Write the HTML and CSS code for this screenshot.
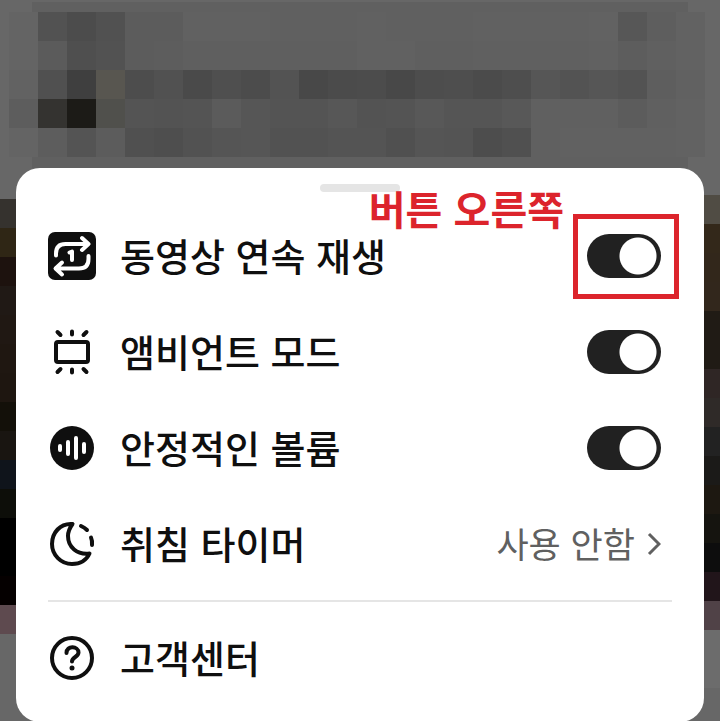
FILE: index.html
```html
<!DOCTYPE html>
<html lang="ko">
<head>
  <meta charset="UTF-8">
  <meta name="viewport" content="width=device-width, initial-scale=1.0">
  <title>재생 설정</title>
  <link rel="stylesheet" href="styles.css">
</head>
<body>
  <div class="header">
    <div id="mosaic" class="mosaic"></div>
  </div>

  <div class="main">
    <div id="stripLeft" class="strip strip-left"></div>

    <div class="sheet">
      <div class="handle"></div>

      <div class="list">
        <div class="row">
          <svg class="icon" viewBox="0 0 48 48" aria-hidden="true">
            <rect width="48" height="48" rx="7" fill="#0f0f0f"/>
            <g fill="none" stroke="#fff" stroke-width="4" stroke-linecap="round" stroke-linejoin="round">
              <path d="M8 23.500v-2q0-9.500 9.500-9.500h22M34 6l6.500 6-6.500 6"/>
              <path d="M40.500 24v3q0 9.500-9.500 9.500H8M14 30.500l-6.500 6 6.500 6"/>
              <path d="M21.500 20.500l2.500-1v8.500"/>
            </g>
          </svg>
          <label class="label" for="autoplay">동영상 연속 재생</label>
          <div class="control">
            <input type="checkbox" id="autoplay" class="toggle" checked>
            <div class="mark"></div>
          </div>
          <div class="note">버튼 오른쪽</div>
        </div>

        <div class="row">
          <svg class="icon" viewBox="0 0 48 48" aria-hidden="true">
            <g fill="none" stroke="#0f0f0f" stroke-width="4" stroke-linecap="round" stroke-linejoin="round">
              <rect x="8" y="14" width="32" height="20" rx="2"/>
              <path d="M9.500 4l3 3M24 3.500v3M38.500 4l-3 3M9.500 44l3-3M24 41.500v3M38.500 44l-3-3"/>
            </g>
          </svg>
          <label class="label" for="ambient">앰비언트 모드</label>
          <div class="control">
            <input type="checkbox" id="ambient" class="toggle" checked>
          </div>
        </div>

        <div class="row">
          <svg class="icon" viewBox="0 0 48 48" aria-hidden="true">
            <circle cx="24" cy="24" r="22" fill="#0f0f0f"/>
            <path d="M12 22v4M20 18v12M28 14v20M36 20v8" fill="none" stroke="#fff" stroke-width="4" stroke-linecap="round"/>
          </svg>
          <label class="label" for="volume">안정적인 볼륨</label>
          <div class="control">
            <input type="checkbox" id="volume" class="toggle" checked>
          </div>
        </div>

        <button type="button" class="row">
          <svg class="icon" viewBox="0 0 48 48" aria-hidden="true">
            <g fill="none" stroke="#0f0f0f" stroke-width="4" stroke-linecap="round" stroke-linejoin="round">
              <path d="M24.500 4C12 3 4 13 4 24C4 35 13 44 24 44C32 44 38.500 40 41.500 33.500C29 35 20 27 20 16C20 11 22 7.500 24.500 4Z"/>
              <path d="M33 6q3.500 1.500 6 4M43 17.500q1.500 3.500 1 7.500"/>
            </g>
          </svg>
          <span class="label">취침 타이머</span>
          <span class="value">사용 안함</span>
          <svg class="chevron" viewBox="0 0 14 24" aria-hidden="true">
            <path d="M2 2l10 10L2 22" fill="none" stroke="#606060" stroke-width="3"/>
          </svg>
        </button>

        <hr class="divider">

        <a href="#help" class="row">
          <svg class="icon" viewBox="0 0 48 48" aria-hidden="true">
            <circle cx="24" cy="24" r="20" fill="none" stroke="#0f0f0f" stroke-width="4"/>
            <path d="M18.500 19c0-8 12-7 12-0.500c0 4.500-6.500 4.500-6.500 9" fill="none" stroke="#0f0f0f" stroke-width="4" stroke-linecap="round"/>
            <circle cx="24" cy="34" r="2.500" fill="#0f0f0f"/>
          </svg>
          <span class="label">고객센터</span>
        </a>
      </div>
    </div>

    <div id="stripRight" class="strip strip-right"></div>
  </div>

  <script src="script.js"></script>
</body>
</html>
```
FILE: styles.css
```css
* {
  box-sizing: border-box;
}

body {
  margin: 0;
  min-height: 100vh;
  background: #676767;
  color: #0f0f0f;
  font-family: "Noto Sans CJK KR", sans-serif;
}

.header {
  height: 168px;
  padding: 12px 15px 0 9px;
  background: linear-gradient(#606060, #606060) 32px 2px / calc(100% - 64px) 100% no-repeat;
}

.mosaic {
  display: grid;
  grid-template-columns: repeat(24, 1fr);
  grid-auto-rows: 29px;
}

.main {
  display: flex;
}

.strip {
  flex: none;
  width: 16px;
}

.strip-left {
  padding-top: 31px;
}

.strip-right {
  padding-top: 27px;
}

.strip div {
  height: 29px;
}

.sheet {
  flex: 1;
  padding: 16px 0;
  background: #fff;
  border-radius: 24px;
}

.handle {
  width: 80px;
  height: 8px;
  margin: 0 auto 16px;
  border-radius: 4px;
  background: #e5e5e5;
}

.row {
  position: relative;
  display: flex;
  align-items: center;
  width: 100%;
  height: 96px;
  padding: 0 43px 0 32px;
  border: none;
  background: none;
  color: inherit;
  font-family: inherit;
  text-align: left;
  text-decoration: none;
}

.icon {
  flex: none;
  width: 48px;
  height: 48px;
  margin-right: 24px;
}

.label,
.value {
  padding-bottom: 2px;
  line-height: 48px;
}

.label {
  flex: 1;
  font-size: 38px;
  font-weight: 500;
}

.control {
  position: relative;
  display: flex;
}

.toggle {
  appearance: none;
  width: 74px;
  height: 44px;
  margin: 0;
  border-radius: 22px;
  background: radial-gradient(circle at 23px 22px, #fff 18px, #212121 19px);
  cursor: pointer;
}

.toggle:checked {
  background: radial-gradient(circle at 51px 22px, #fff 18px, #212121 19px);
}

/* highlight round the first toggle */
.mark {
  position: absolute;
  inset: -20px -18px -21px -14px;
  border: 5px solid #dc242c;
  pointer-events: none;
}

.note {
  position: absolute;
  top: -24px;
  right: 140px;
  color: #dc242c;
  font-size: 40px;
  font-weight: 700;
  line-height: 48px;
}

.value {
  color: #606060;
  font-size: 35px;
}

.chevron {
  width: 14px;
  height: 24px;
  margin-left: 12px;
}

.divider {
  height: 2px;
  margin: 8px 32px;
  border: none;
  background: #e5e5e5;
}
```
FILE: script.js
```js
const mosaic = [
  "#646464 #525252 #4c4c4c #515151 #5c5c5c #5c5c5c #616161 #616161 #616161 #606060 #606060 #606060 #616161 #606060 #606060 #606060 #616161 #616161 #616161 #616161 #626262 #575757 #5e5e5e #626262",
  "#646464 #5b5b5b #4f4f4f #525252 #5c5c5c #5d5d5d #5f5f5f #5f5f5f #5f5f5f #5f5f5f #5f5f5f #5f5f5f #616161 #616161 #5f5f5f #5f5f5f #606060 #606060 #606060 #606060 #616161 #5d5d5d #606060 #626262",
  "#626262 #505050 #3f3f3f #585650 #4d4d4d #515151 #4a4a4a #4f4f4f #4c4c4c #535353 #484848 #4b4b4b #4c4c4c #484848 #4d4d4d #4e4e4e #4b4b4b #4e4e4e #565656 #535353 #565656 #535353 #5e5e5e #616161",
  "#5d5d5d #343330 #1c1b17 #50504c #545454 #535353 #545454 #5b5b5b #565656 #545454 #545454 #575757 #535353 #545454 #585858 #555555 #555555 #585858 #606060 #606060 #606060 #5c5c5c #606060 #626262",
  "#646464 #5d5d5d #545454 #5c5c5c #505050 #4e4e4e #525252 #555555 #565656 #525252 #525252 #545454 #545454 #505050 #555555 #545454 #4d4d4d #505050 #606060 #616161 #616161 #616161 #616161 #626262"
];

const stripLeft = "#35322e #2f2615 #1d120e #201915 #201813 #1f1711 #1e1610 #131009 #191511 #0f141b #0d0e09 #000000 #000000 #050000 #5e4a4f";
const stripRight = "#504c44 #33281a #32271b #32271c #201b15 #201b15 #2f2625 #2f2a28 #222222 #1b1a18 #1d1811 #15140f #0d0d0d #21151a #504247 #6c6c6c #6c6c6c";

function fill(id, colors) {
  const box = document.getElementById(id);
  colors.split(" ").forEach((color) => {
    const tile = document.createElement("div");
    tile.style.background = color;
    box.appendChild(tile);
  });
}

fill("mosaic", mosaic.join(" "));
fill("stripLeft", stripLeft);
fill("stripRight", stripRight);
```
